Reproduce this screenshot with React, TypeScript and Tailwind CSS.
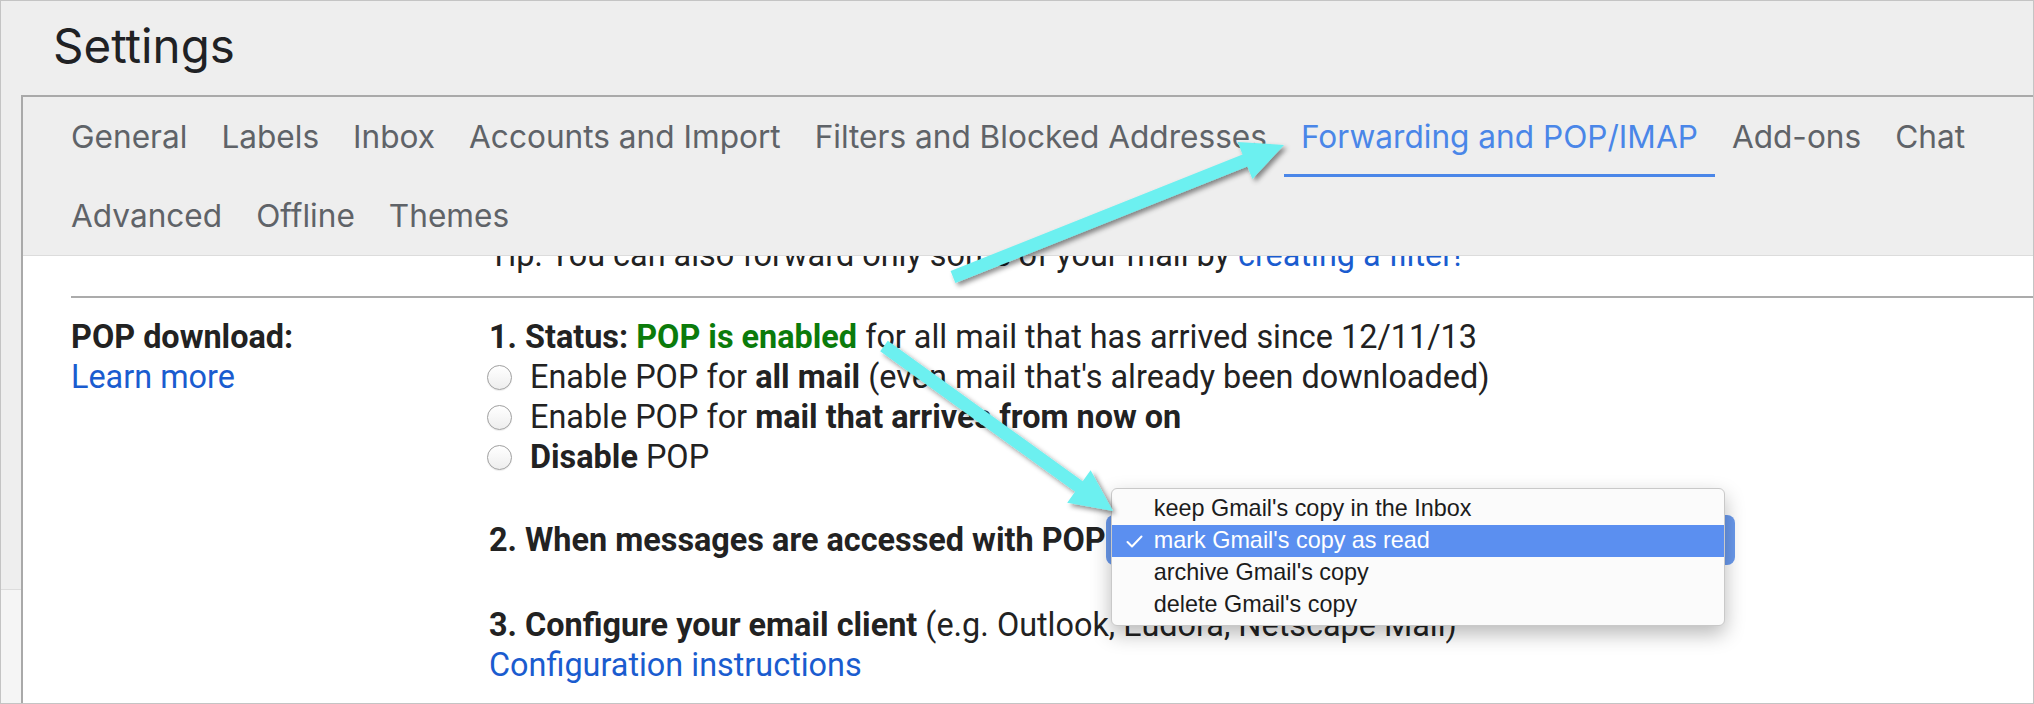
import React from "react";

const row1 = [
  "General",
  "Labels",
  "Inbox",
  "Accounts and Import",
  "Filters and Blocked Addresses",
  "Forwarding and POP/IMAP",
  "Add-ons",
  "Chat",
];
const row2 = ["Advanced", "Offline", "Themes"];

function arrowPts(
  x1: number,
  y1: number,
  x2: number,
  y2: number,
  sw: number,
  hl: number,
  hw: number
) {
  const dx = x2 - x1;
  const dy = y2 - y1;
  const L = Math.hypot(dx, dy);
  const ux = dx / L;
  const uy = dy / L;
  const nx = -uy;
  const ny = ux;
  const bx = x2 - ux * hl;
  const by = y2 - uy * hl;
  const p = (x: number, y: number) => `${x.toFixed(1)},${y.toFixed(1)}`;
  return [
    p(x1 + nx * sw, y1 + ny * sw),
    p(bx + nx * sw, by + ny * sw),
    p(bx + nx * hw, by + ny * hw),
    p(x2, y2),
    p(bx - nx * hw, by - ny * hw),
    p(bx - nx * sw, by - ny * sw),
    p(x1 - nx * sw, y1 - ny * sw),
  ].join(" ");
}

function Radio() {
  return (
    <span className="-ml-[2px] mr-[18px] inline-block h-[25px] w-[25px] shrink-0 rounded-full border border-[#a0a0a0] bg-linear-to-b from-white to-[#eeeeee] shadow-[0_1px_1px_rgba(0,0,0,0.08)]" />
  );
}

const menuItems = [
  "keep Gmail's copy in the Inbox",
  "mark Gmail's copy as read",
  "archive Gmail's copy",
  "delete Gmail's copy",
];

export default function App() {
  return (
    <div className="relative flex h-[704px] w-[2034px] flex-col overflow-hidden border border-[#c4c4c4] bg-[#eeeeee]">
      {/* Header */}
      <div className="h-[94px] shrink-0 pl-[52px] pt-[21px] font-['Inter',sans-serif] text-[47.5px] leading-none text-[#202124]">
        Settings
      </div>

      <div className="flex min-h-0 flex-1">
        {/* left strip */}
        <div className="flex w-[20px] shrink-0 flex-col">
          <div className="h-[494px] shrink-0" />
          <div className="flex-1 border-t border-[#dcdcdc] bg-[#f5f5f5]" />
        </div>

        {/* panel */}
        <div className="flex min-w-0 flex-1 flex-col border-l-2 border-t-2 border-[#a9a9a9] bg-white">
          {/* tabs */}
          <div className="shrink-0 border-b border-[#dcdcdc] bg-[#eeeeee] pl-[31px] font-['Inter',sans-serif] text-[31.6px] leading-none">
            <div className="flex h-[80px]">
              {row1.map((t) => {
                const active = t === "Forwarding and POP/IMAP";
                return (
                  <div
                    key={t}
                    className={
                      active
                        ? "flex h-full items-center border-y-[3px] border-t-transparent border-b-[#4a86e8] px-[17px] whitespace-nowrap text-[#4a86e8]"
                        : "flex h-full items-center border-y-[3px] border-transparent px-[17px] whitespace-nowrap text-[#5f6368]"
                    }
                  >
                    {t}
                  </div>
                );
              })}
            </div>
            <div className="flex h-[78px] items-center">
              {row2.map((t) => (
                <div key={t} className="px-[17px] whitespace-nowrap text-[#5f6368]">
                  {t}
                </div>
              ))}
            </div>
          </div>

          {/* content */}
          <div className="min-h-0 flex-1 overflow-hidden pl-[48px] font-[Roboto,sans-serif] text-[32.4px] leading-[40px] text-[#222222]">
            <div className="-mt-[21px] pl-[418px] whitespace-nowrap">
              Tip: You can also forward only some of your mail by{" "}
              <span className="text-[#1a5ccf]">creating a filter!</span>
            </div>
            <div className="mt-[21px] h-[2px] bg-[#ababab]" />

            <div className="mt-[19px] flex">
              <div className="w-[418px] shrink-0">
                <div className="font-bold">POP download:</div>
                <div className="text-[#1a5ccf]">Learn more</div>
              </div>
              <div className="min-w-0 flex-1 whitespace-nowrap">
                <div>
                  <span className="font-bold">1. Status: </span>
                  <span className="font-bold text-[#0b7b0b]">POP is enabled</span> for all
                  mail that has arrived since 12/11/13
                </div>
                <div className="flex h-[40px] items-center">
                  <Radio />
                  <span>
                    Enable POP for <span className="font-bold">all mail</span> (even mail
                    that's already been downloaded)
                  </span>
                </div>
                <div className="flex h-[40px] items-center">
                  <Radio />
                  <span>
                    Enable POP for{" "}
                    <span className="font-bold">mail that arrives from now on</span>
                  </span>
                </div>
                <div className="flex h-[40px] items-center">
                  <Radio />
                  <span>
                    <span className="font-bold">Disable</span> POP
                  </span>
                </div>

                <div className="mt-[38px] flex h-[50px] items-center">
                  <span className="font-bold">2. When messages are accessed with POP</span>
                  <div className="relative ml-[0px] h-[50px] w-[629px] shrink-0 rounded-[8px] bg-[#6a9aee]">
                    <div className="absolute left-[5px] top-[-27px] w-[614px] rounded-[6px] border border-[#c9c9c9] bg-[#fbfbfb] py-[4px] font-['Liberation_Sans',Arial,sans-serif] text-[23.4px] leading-none text-[#1c1c1c] shadow-[0_8px_20px_rgba(0,0,0,0.28)]">
                      {menuItems.map((m, i) => (
                        <div
                          key={m}
                          className={
                            i === 1
                              ? "relative flex h-[32px] items-center bg-[#5b8ff0] pl-[42px] text-white"
                              : "relative flex h-[32px] items-center pl-[42px]"
                          }
                        >
                          {i === 1 && (
                            <svg
                              className="absolute left-[14px] top-[10px]"
                              width="17"
                              height="13"
                              viewBox="0 0 17 13"
                            >
                              <polyline
                                points="1.5,7 6,11.5 15.5,1.5"
                                fill="none"
                                stroke="white"
                                strokeWidth="2"
                                strokeLinecap="round"
                                strokeLinejoin="round"
                              />
                            </svg>
                          )}
                          {m}
                        </div>
                      ))}
                    </div>
                  </div>
                </div>

                <div className="mt-[40px]">
                  <span className="font-bold">3. Configure your email client</span> (e.g.
                  Outlook, Eudora, Netscape Mail)
                </div>
                <div className="text-[#1a5ccf]">Configuration instructions</div>
              </div>
            </div>
          </div>
        </div>
      </div>

      {/* annotation arrows */}
      <svg
        className="pointer-events-none absolute left-[-1px] top-[-1px]"
        width="2034"
        height="704"
        viewBox="0 0 2034 704"
      >
        <defs>
          <filter id="ash" x="-20%" y="-20%" width="140%" height="140%">
            <feDropShadow dx="3" dy="3" stdDeviation="2.5" floodColor="#000" floodOpacity="0.45" />
          </filter>
        </defs>
        <polygon
          points={arrowPts(953, 277, 1284, 145, 6.5, 42, 20)}
          fill="#6cf0f0"
          filter="url(#ash)"
        />
        <polygon
          points={arrowPts(884, 346, 1113, 511, 6.5, 42, 20)}
          fill="#6cf0f0"
          filter="url(#ash)"
        />
      </svg>
    </div>
  );
}
